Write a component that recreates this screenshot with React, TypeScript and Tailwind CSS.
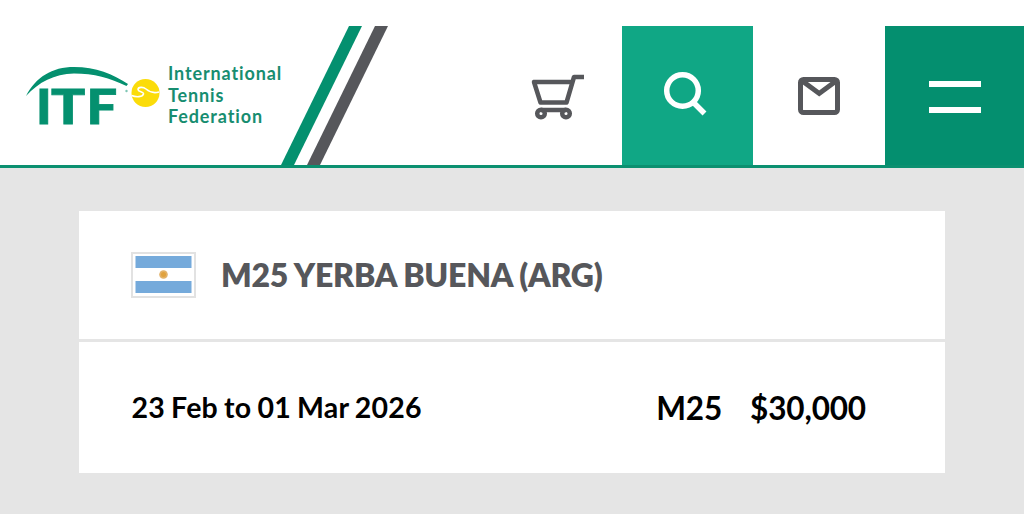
const Logo = () => {
  return (
    <div className="flex w-[284px] shrink-0">
      <svg width="168" height="139" viewBox="0 26 168 139" className="shrink-0">
        <path
          d="M26 96C36 77 52 67 74 67c22 0 39 7 54 17l-1.500 2C110 78 94 73.500 74 73.500 54 74 39 82 26 96z"
          fill="#04906f"
        />
        <g
          fill="#04906f"
          stroke="#04906f"
          strokeWidth="0.800"
          fontFamily="Lato"
          fontWeight="900"
          fontSize="48"
        >
          <text transform="translate(36 123.500) scale(1.080 1)">I</text>
          <text transform="translate(51 123.500) scale(1.180 1)">T</text>
          <text transform="translate(86.500 123.500) scale(1.130 1)">F</text>
        </g>
        <circle cx="126.500" cy="91" r="1.200" fill="#7fc6b4" />
        <circle cx="145.500" cy="93" r="14" fill="#fbdc0a" />
        <path
          d="M131.500 95.500c5 2 11 1.500 12-1.500.5-2.500-5.500-2-5.500-4.500s5-3 8-.5c4 3.500 8 4.500 13 3"
          fill="none"
          stroke="#fff"
          strokeWidth="1.600"
        />
      </svg>
      <div className="flex flex-col pt-[37px] text-[18px] leading-[21.500px] font-bold tracking-[0.880px] text-[#178d70]">
        <span>International</span>
        <span>Tennis</span>
        <span>Federation</span>
      </div>
    </div>
  );
};

const Stripes = () => {
  return (
    <svg width="107" height="139" viewBox="281 26 107 139" className="-ml-[3px] shrink-0">
      <path d="M349 26h13L294 165h-13z" fill="#04906f" />
      <path d="M375 26h13L320 165h-13z" fill="#56575b" />
    </svg>
  );
};

const Header = () => {
  return (
    <header className="flex h-[168px] border-b-[3px] border-[#0b9070] bg-white pt-[26px]">
      <Logo />
      <Stripes />
      <nav className="ml-auto flex">
        <a href="#" aria-label="Shop" className="flex w-[129px] items-center justify-center">
          <svg width="56" height="48" viewBox="530 72 56 48" fill="none" stroke="#56575b" strokeWidth="4.500">
            <path d="M584 77h-10l-7.500 25.500h-26L534 82h38" strokeLinejoin="round" />
            <path d="M541 110h25" />
            <circle cx="541" cy="113.500" r="3.800" />
            <circle cx="566" cy="113.500" r="3.800" />
          </svg>
        </a>
        <a href="#" aria-label="Search" className="flex w-[131px] items-center justify-center bg-[#10a785] pr-1.5 pb-[3px]">
          <svg width="46" height="46" viewBox="662 71 46 46" fill="none" stroke="#fff" strokeWidth="5.500">
            <circle cx="682.500" cy="90.500" r="15.800" />
            <path d="M693.500 102.500L704.500 113.500" />
          </svg>
        </a>
        <a href="#" aria-label="Mail" className="flex w-[132px] items-center justify-center">
          <svg width="42" height="38" viewBox="798 77 42 38" fill="none" stroke="#56575b" strokeWidth="5">
            <rect x="800.500" y="79.500" width="37" height="33" rx="3" />
            <path d="M803 81.500l16.200 12 16.200-12" />
          </svg>
        </a>
        <button
          aria-label="Menu"
          className="flex w-[139px] flex-col items-center justify-center gap-[20px] bg-[#048f6f] pt-0.5"
        >
          <span className="h-1.5 w-[52px] bg-white" />
          <span className="h-1.5 w-[52px] bg-white" />
        </button>
      </nav>
    </header>
  );
};

const Flag = () => {
  return (
    <svg width="65" height="46" viewBox="0 0 65 46" className="shrink-0">
      <rect x="1" y="1" width="63" height="44" fill="#fff" stroke="#e2e2e2" strokeWidth="2" />
      <path d="M4.500 4h56v12h-56zM4.500 29h56v12h-56z" fill="#75aadb" />
      <circle cx="32.500" cy="22.500" r="4.300" fill="#e3b268" />
      <circle cx="32.500" cy="22.500" r="2.500" fill="#e0a23e" />
    </svg>
  );
};

const App = () => {
  return (
    <div className="h-[514px] w-[1024px] overflow-hidden bg-[#e5e5e5] font-['Lato',sans-serif]">
      <Header />
      <main className="mt-[43px] ml-[79px] w-[866px]">
        <div className="flex h-[128px] items-center gap-[25px] bg-white pl-[52px]">
          <Flag />
          <h1 className="text-[32px] leading-none font-extrabold tracking-[-0.260px] whitespace-nowrap text-[#56575b]">
            M25 YERBA BUENA (ARG)
          </h1>
        </div>
        <div className="mt-[3px] flex h-[131px] items-center justify-between bg-white pr-[79px] pl-[52.500px] font-bold text-black">
          <p className="text-[28.500px] leading-none tracking-[0.200px] [word-spacing:-1px] whitespace-nowrap">
            23 Feb to 01 Mar 2026
          </p>
          <p className="flex gap-[28px] pt-0.5 text-[31.500px] leading-none tracking-[-0.150px] whitespace-nowrap">
            <span>M25</span>
            <span>$30,000</span>
          </p>
        </div>
      </main>
    </div>
  );
};

export default App;
